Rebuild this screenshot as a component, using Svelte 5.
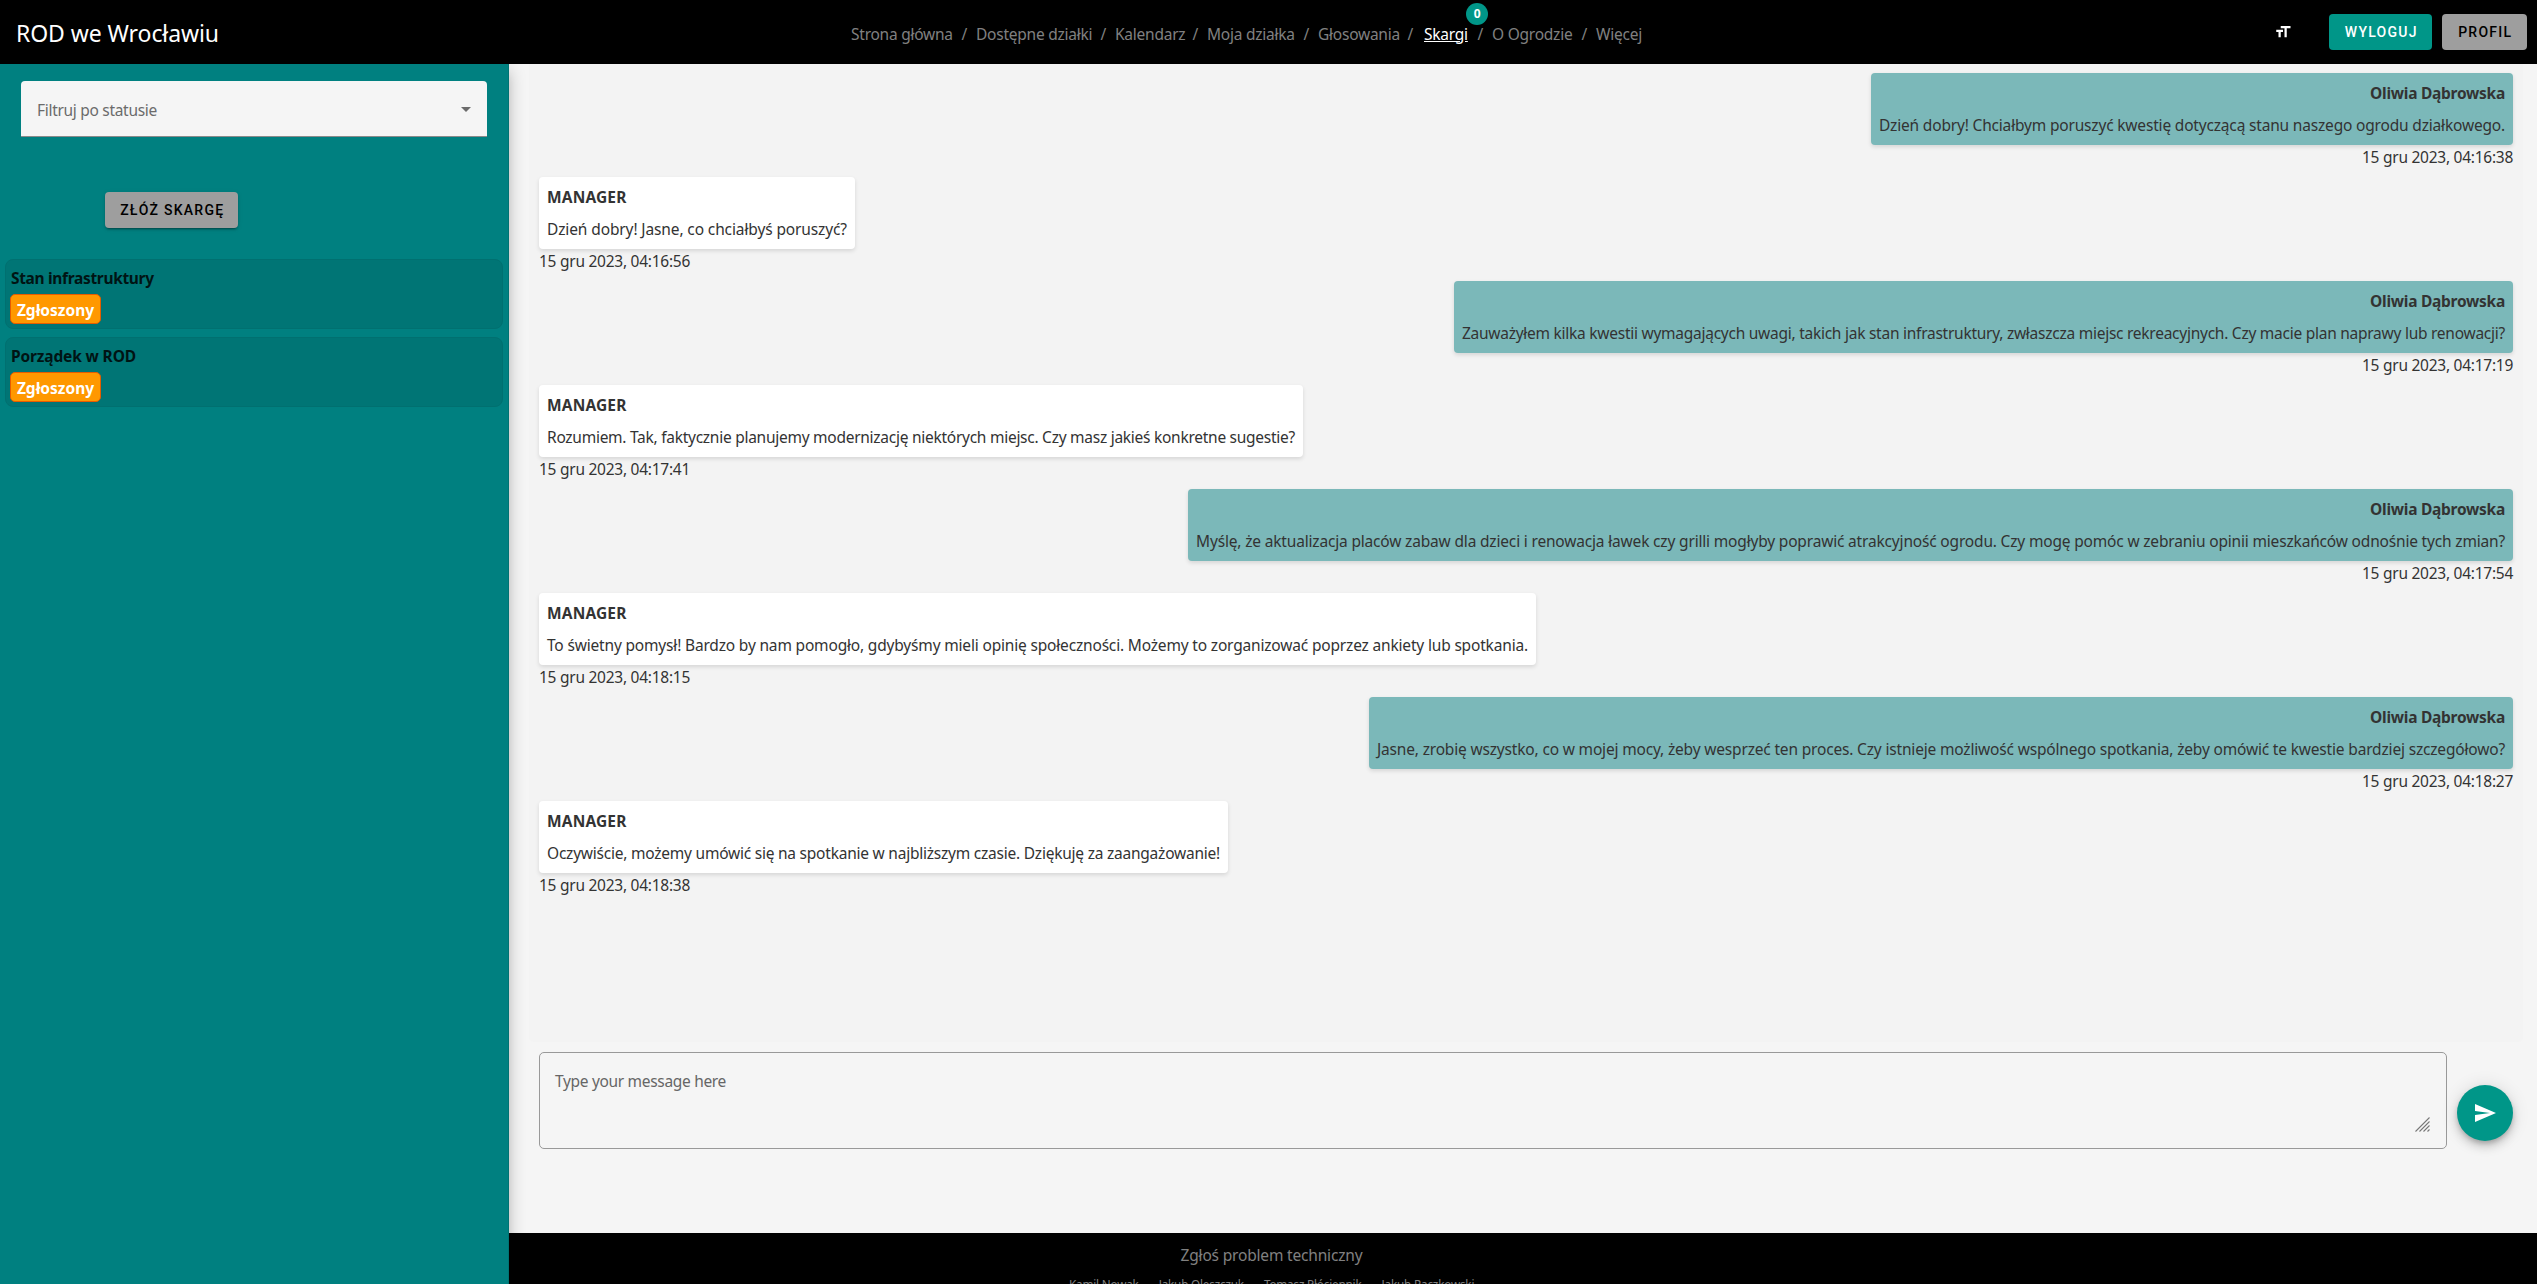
<script>
  const nav = [
    { label: 'Strona główna', width: 102 },
    { label: 'Dostępne działki', width: 116 },
    { label: 'Kalendarz', width: 69 },
    { label: 'Moja działka', width: 88 },
    { label: 'Głosowania', width: 81 },
    { label: 'Skargi', width: 44, active: true, badge: 0 },
    { label: 'O Ogrodzie', width: 81 },
    { label: 'Więcej', width: 46 }
  ];

  const complaints = [
    { title: 'Stan infrastruktury', status: 'Zgłoszony', tracking: -0.33 },
    { title: 'Porządek w ROD', status: 'Zgłoszony', tracking: -0.14 }
  ];

  const me = 'Oliwia Dąbrowska';
  const messages = [
    { author: me, text: 'Dzień dobry! Chciałbym poruszyć kwestię dotyczącą stanu naszego ogrodu działkowego.', time: '04:16:38', tracking: -0.18 },
    { author: 'MANAGER', text: 'Dzień dobry! Jasne, co chciałbyś poruszyć?', time: '04:16:56', tracking: -0.12 },
    { author: me, text: 'Zauważyłem kilka kwestii wymagających uwagi, takich jak stan infrastruktury, zwłaszcza miejsc rekreacyjnych. Czy macie plan naprawy lub renowacji?', time: '04:17:19', tracking: -0.256 },
    { author: 'MANAGER', text: 'Rozumiem. Tak, faktycznie planujemy modernizację niektórych miejsc. Czy masz jakieś konkretne sugestie?', time: '04:17:41', tracking: -0.265 },
    { author: me, text: 'Myślę, że aktualizacja placów zabaw dla dzieci i renowacja ławek czy grilli mogłyby poprawić atrakcyjność ogrodu. Czy mogę pomóc w zebraniu opinii mieszkańców odnośnie tych zmian?', time: '04:17:54', tracking: -0.177 },
    { author: 'MANAGER', text: 'To świetny pomysł! Bardzo by nam pomogło, gdybyśmy mieli opinię społeczności. Możemy to zorganizować poprzez ankiety lub spotkania.', time: '04:18:15', tracking: -0.176 },
    { author: me, text: 'Jasne, zrobię wszystko, co w mojej mocy, żeby wesprzeć ten proces. Czy istnieje możliwość wspólnego spotkania, żeby omówić te kwestie bardziej szczegółowo?', time: '04:18:27', tracking: -0.174 },
    { author: 'MANAGER', text: 'Oczywiście, możemy umówić się na spotkanie w najbliższym czasie. Dziękuję za zaangażowanie!', time: '04:18:38', tracking: -0.229 }
  ];

  const authors = ['Kamil Nowak', 'Jakub Oleszczuk', 'Tomasz Płóciennik', 'Jakub Raczkowski'];
</script>

<div class="page">
  <header>
    <div class="brand">ROD we Wrocławiu</div>
    <nav>
      {#each nav as item, i}
        {#if i > 0}<span class="sep">/</span>{/if}
        <a class:active={item.active} style:width="{item.width}px">
          {item.label}
          {#if item.badge !== undefined}<span class="badge">{item.badge}</span>{/if}
        </a>
      {/each}
    </nav>
    <div class="actions">
      <svg class="size-icon" viewBox="0 0 24 24" width="18" height="18"><path fill="#fff" d="M9 4v3h5v12h3V7h5V4H9zm-6 8h3v7h3v-7h3V9H3v3z" /></svg>
      <button class="btn teal logout">WYLOGUJ</button>
      <button class="btn grey profile">PROFIL</button>
    </div>
  </header>

  <div class="body">
    <aside>
      <div class="select">
        <span>Filtruj po statusie</span>
        <svg viewBox="0 0 10 5" width="10" height="5"><path fill="#6b6b6b" d="M0 0h10L5 5z" /></svg>
      </div>
      <button class="btn grey submit">ZŁÓŻ SKARGĘ</button>
      <div class="cards">
        {#each complaints as c}
          <div class="card">
            <div class="title" style:letter-spacing="{c.tracking}px">{c.title}</div>
            <span class="status">{c.status}</span>
          </div>
        {/each}
      </div>
    </aside>

    <div class="right">
      <main>
        <section class="chat">
          {#each messages as m}
            <article class:mine={m.author === me}>
              <div class="bubble">
                <div class="author">{m.author}</div>
                <div class="text" style:letter-spacing="{m.tracking}px">{m.text}</div>
              </div>
              <time>15 gru 2023, {m.time}</time>
            </article>
          {/each}
        </section>
        <div class="composer">
          <div class="input">
            <span>Type your message here</span>
            <svg class="grip" viewBox="0 0 15 15" width="15" height="15"><path stroke="#777" stroke-width="1.1" fill="none" d="M.5 14.5l14-14M4.5 14.5l10-10M8.5 14.5l6-6M12.500 14.5l2-2" /></svg>
          </div>
          <button class="fab" aria-label="Wyślij">
            <svg viewBox="0 0 24 24" width="24" height="24"><path fill="#fff" d="M2.010 21L23 12 2.010 3 2 10l15 2-15 2z" /></svg>
          </button>
        </div>
      </main>
      <footer>
        <div class="report">Zgłoś problem techniczny</div>
        <div class="authors">
          {#each authors as a}<span>{a}</span>{/each}
        </div>
      </footer>
    </div>
  </div>
</div>

<style>
  :global(body) {
    margin: 0;
    overflow: hidden;
  }
  .page {
    display: flex;
    flex-direction: column;
    height: 1284px;
    overflow: hidden;
    font: 15.5px/24px 'Noto Sans', 'Open Sans', sans-serif;
    color: #333;
    background: #f5f5f5;
  }
  * {
    box-sizing: border-box;
  }
  header {
    flex: none;
    display: grid;
    grid-template-columns: 851px 1fr auto;
    align-items: center;
    height: 64px;
    background: #000;
    color: #fff;
    position: relative;
    z-index: 2;
  }
  .brand {
    padding: 2px 0 0 16px;
    font-size: 23px;
    line-height: 32px;
    letter-spacing: -0.08px;
  }
  nav {
    display: flex;
    color: #808080;
    white-space: nowrap;
    padding-top: 3px;
  }
  nav a {
    position: relative;
    letter-spacing: -0.24px;
  }
  nav a.active {
    color: #fff;
    text-decoration: underline;
    margin: 0 1px 0 2px;
  }
  .sep {
    width: 23px;
    text-align: center;
  }
  .badge {
    position: absolute;
    left: 42px;
    top: -19px;
    width: 22px;
    height: 22px;
    border-radius: 50%;
    background: #009688;
    font-size: 12px;
    line-height: 22px;
    font-weight: 700;
    text-align: center;
    display: inline-block;
  }
  .actions {
    display: flex;
    align-items: center;
    padding-right: 10px;
  }
  .size-icon {
    margin-right: 37px;
  }
  .btn {
    flex: none;
    height: 36px;
    padding: 0 0 0 1.5px;
    border: 0;
    border-radius: 4px;
    font: 500 14px/36px Roboto, sans-serif;
    letter-spacing: 1.25px;
    text-align: center;
    box-shadow: 0 3px 1px -2px rgba(0, 0, 0, 0.2), 0 2px 2px rgba(0, 0, 0, 0.14), 0 1px 5px rgba(0, 0, 0, 0.12);
  }
  .teal {
    background: #009688;
    color: #fff;
  }
  .grey {
    background: #9e9e9e;
    color: #000;
  }
  .logout {
    width: 103px;
    margin-right: 10px;
  }
  .profile {
    width: 85px;
  }
  .body {
    flex: 1;
    display: flex;
    min-height: 0;
  }
  aside {
    flex: none;
    width: 509px;
    display: flex;
    flex-direction: column;
    align-items: flex-start;
    background: #008080;
    border-right: 1px solid #007373;
    box-shadow: 0 8px 10px -5px rgba(0, 0, 0, 0.2), 0 6px 16px rgba(0, 0, 0, 0.24);
    position: relative;
    z-index: 1;
  }
  .select {
    display: flex;
    align-items: center;
    justify-content: space-between;
    width: 466px;
    height: 56px;
    margin: 17px 0 0 21px;
    padding: 3px 16px 0;
    background: #f5f5f5;
    border-bottom: 1px solid #8a8a8a;
    border-radius: 4px 4px 0 0;
    color: #6b6b6b;
    letter-spacing: -0.3px;
  }
  .select svg {
    margin-top: -2px;
  }
  .submit {
    width: 133px;
    margin: 55px 0 31px 105px;
  }
  .cards {
    display: flex;
    flex-direction: column;
    gap: 8px;
    padding-left: 5px;
  }
  .card {
    width: 498px;
    height: 70px;
    padding: 6px 4px;
    border: 1px solid #007070;
    border-radius: 8px;
    background: #007575;
  }
  .title {
    padding-left: 1px;
    font-weight: 700;
    color: #001414;
  }
  .status {
    display: block;
    width: 91px;
    height: 30px;
    margin-top: 4px;
    border: 1px solid #e65c00;
    border-radius: 5px;
    background: #ff9800;
    color: #fff;
    font-weight: 700;
    line-height: 30px;
    text-align: center;
  }
  .right {
    flex: 1;
    display: flex;
    flex-direction: column;
    min-width: 0;
  }
  main {
    flex: none;
    height: 1169px;
    padding: 0 14px 0 20px;
  }
  .chat {
    height: 978px;
    padding: 9px 10px 0;
    border-radius: 0 0 5px 5px;
    background: #f3f3f3;
  }
  article {
    display: flex;
    flex-direction: column;
    align-items: flex-start;
    height: 104px;
  }
  .mine {
    align-items: flex-end;
    text-align: right;
  }
  .bubble {
    height: 72px;
    padding: 8px;
    border-radius: 4px;
    background: #fff;
    box-shadow: 0 2px 4px rgba(0, 0, 0, 0.12);
    white-space: nowrap;
  }
  .author {
    margin-bottom: 8px;
    font-weight: 700;
    letter-spacing: 0.15px;
  }
  .mine .author {
    letter-spacing: -0.26px;
  }
  .mine .bubble {
    background: #7bb8b9;
  }
  time {
    letter-spacing: -0.26px;
  }
  .composer {
    display: flex;
    gap: 10px;
    padding: 10px 10px 0;
  }
  .input {
    display: flex;
    justify-content: space-between;
    width: 1908px;
    height: 97px;
    padding: 16px 16px 16px 15px;
    border: 1px solid #999;
    border-radius: 5px;
    color: #666;
    letter-spacing: -0.32px;
  }
  .grip {
    align-self: flex-end;
  }
  .fab {
    display: grid;
    place-items: center;
    width: 56px;
    height: 56px;
    margin-top: 33px;
    padding: 0;
    border: 0;
    border-radius: 50%;
    background: #009688;
    box-shadow: 0 3px 5px -1px rgba(0, 0, 0, 0.2), 0 6px 10px rgba(0, 0, 0, 0.14), 0 1px 18px rgba(0, 0, 0, 0.12);
  }
  footer {
    flex: 1;
    position: relative;
    z-index: 2;
    overflow: hidden;
    padding-top: 10px;
    background: #000;
    color: #808080;
  }
  .report {
    width: 1525px;
    text-align: center;
    letter-spacing: -0.18px;
  }
  .authors {
    display: flex;
    gap: 20px;
    padding: 8px 0 0 560px;
    font-size: 11.7px;
    line-height: 18px;
    letter-spacing: -0.17px;
    white-space: nowrap;
  }
</style>
